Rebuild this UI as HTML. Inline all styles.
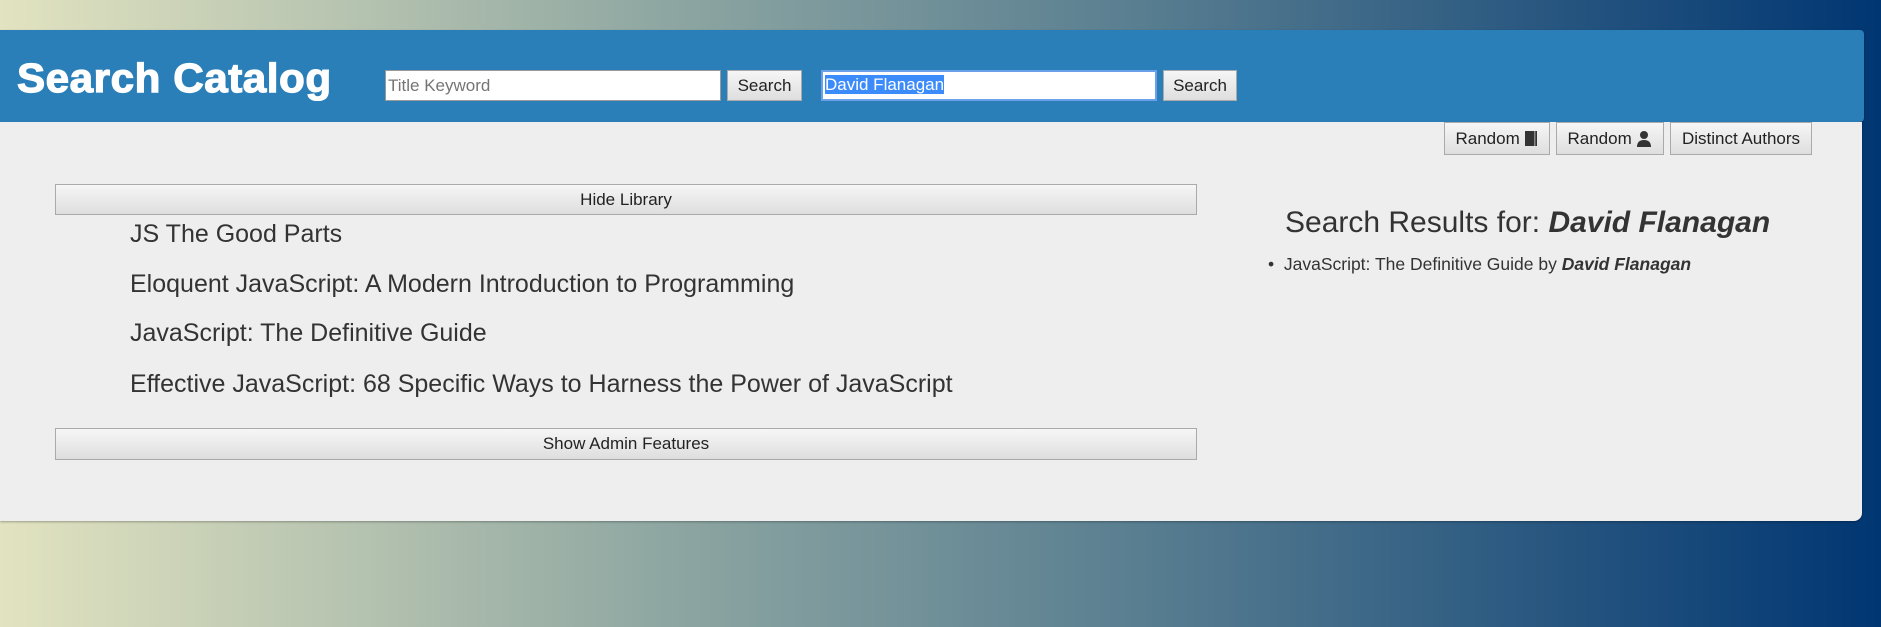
<!DOCTYPE html>
<html><head><style>
*{box-sizing:border-box}
body{margin:0;width:1881px;height:627px;overflow:hidden;font-family:"Liberation Sans",Arial,sans-serif;background:linear-gradient(to right,#e2e3c0 0%,#8fa7a2 35%,#5a7f91 60%,#003672 100%);position:relative}
.hdr{position:absolute;left:0;top:30px;width:1864px;height:92px;background:#2b7fb8;border-radius:0 4px 4px 0;box-shadow:0 1px 2px rgba(0,0,0,.3)}
.panel{position:absolute;left:0;top:122px;width:1862px;height:399px;background:#eeeeee;border-radius:0 0 8px 0;box-shadow:0 1px 2px rgba(0,0,0,.3)}
h1{position:absolute;left:17px;top:50px;margin:0;color:#fff;font-size:41px;font-weight:bold;line-height:56px;letter-spacing:0.5px;transform:scaleX(1.03);transform-origin:left;-webkit-text-stroke:1.2px #fff}
input{position:absolute;height:31px;border:1px solid #999;font-family:inherit;font-size:17px;padding:2px 2px;background:#fff;color:#333}
.b{position:absolute;border:1px solid #aaa;background:linear-gradient(#f6f6f6,#dedede);font-size:17px;color:#222;text-align:center;display:flex;align-items:center;justify-content:center}
.bk{position:absolute;left:130px;font-size:25px;color:#333}
</style></head><body>
<div class="hdr"></div>
<div class="panel"></div>
<h1>Search Catalog</h1>
<input style="left:385px;top:70px;width:336px" placeholder="Title Keyword">
<div class="b" style="left:727px;top:70px;width:75px;height:31px">Search</div>
<div style="position:absolute;left:821px;top:70px;width:336px;height:31px;border:2px solid #6aa0e8;background:#fff;padding:3px 2px;font-size:17px"><span style="background:#3b8bfa;color:#fff">David Flanagan</span></div>
<div class="b" style="left:1163px;top:70px;width:74px;height:31px">Search</div>
<div class="b" style="left:1444px;top:122px;width:106px;height:33px">Random&nbsp;<svg width="14" height="17" viewBox="0 0 14 17"><rect x="1" y="1" width="12" height="15" fill="#333"/><rect x="10" y="1" width="1.5" height="15" fill="#888"/></svg></div>
<div class="b" style="left:1556px;top:122px;width:108px;height:33px">Random&nbsp;<svg width="16" height="17" viewBox="0 0 16 17"><circle cx="8" cy="5" r="4" fill="#333"/><path d="M1 17 Q1 10 8 10 Q15 10 15 17Z" fill="#333"/></svg></div>
<div class="b" style="left:1670px;top:122px;width:142px;height:33px">Distinct Authors</div>
<div class="b" style="left:55px;top:184px;width:1142px;height:31px">Hide Library</div>
<div class="bk" style="top:220px">JS The Good Parts</div>
<div class="bk" style="top:270px">Eloquent JavaScript: A Modern Introduction to Programming</div>
<div class="bk" style="top:319px">JavaScript: The Definitive Guide</div>
<div class="bk" style="top:370px">Effective JavaScript: 68 Specific Ways to Harness the Power of JavaScript</div>
<div class="b" style="left:55px;top:428px;width:1142px;height:32px">Show Admin Features</div>
<div style="position:absolute;left:1285px;top:206px;font-size:30px;color:#333">Search Results for: <b><i>David Flanagan</i></b></div>
<div style="position:absolute;left:1268px;top:254px;font-size:17.5px;color:#333">•&nbsp;&nbsp;JavaScript: The Definitive Guide by <b><i>David Flanagan</i></b></div>
</body></html>
